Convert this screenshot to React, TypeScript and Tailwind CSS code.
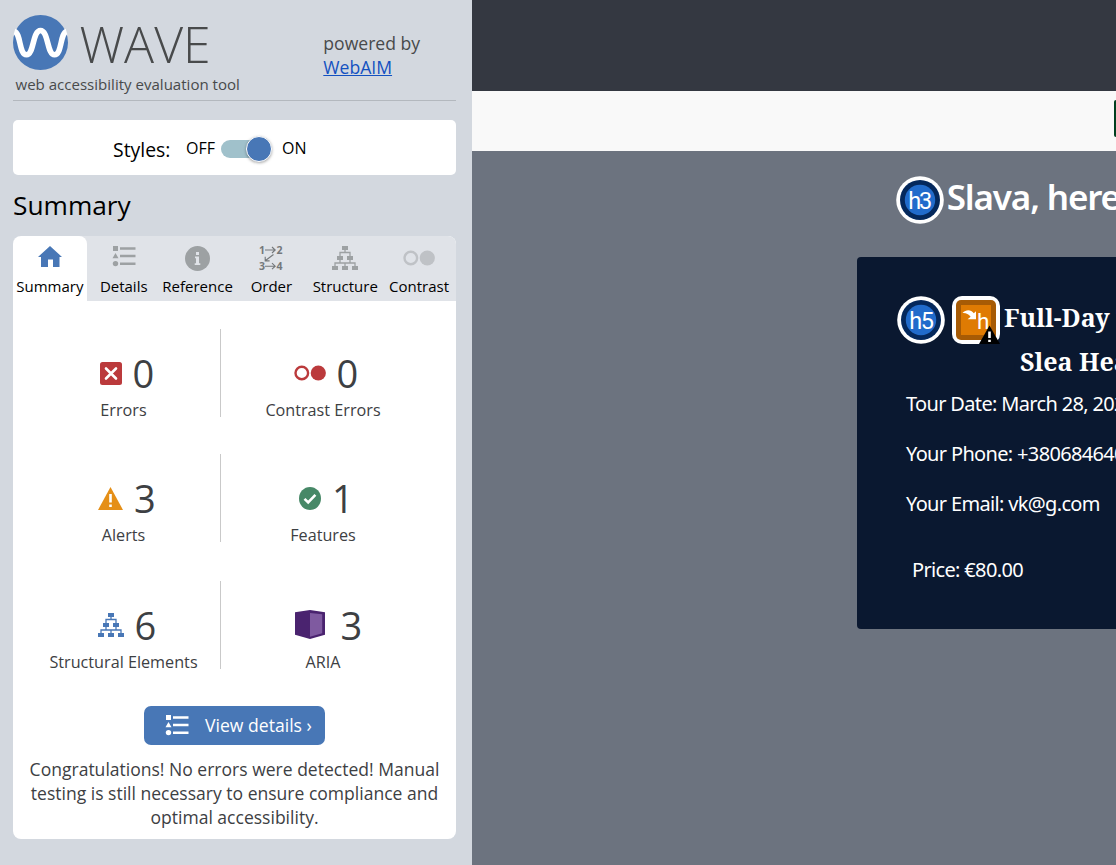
import type { ReactNode } from "react";

const TreeIcon = ({ className = "" }: { className?: string }) => (
  <svg viewBox="0 0 26 24" className={className} fill="currentColor">
    <path d="M10 0h6v4h-6zM5 10h6v4H5zM15 10h6v4h-6zM0 20h6v4H0zM10 20h6v4h-6zM20 20h6v4h-6z" />
    <path d="M13 4v3M8 10V6.500h10v3.500M8 14v3M18 14v3M3 20v-3h20v3M13 17v3" fill="none" stroke="currentColor" strokeWidth="1.300" />
  </svg>
);

const ListIcon = ({ className = "" }: { className?: string }) => (
  <svg viewBox="0 0 24 21" className={className} fill="currentColor">
    <path d="M1 0h5v5H1zM8 1.3h15.500v2.500H8zM8 8.800h15.500v2.500H8zM8 16.400h15.500v2.500H8zM3.500 7l3 5.300h-6z" />
    <circle cx="3.500" cy="17.600" r="2.700" />
  </svg>
);

const RingsIcon = ({ className = "" }: { className?: string }) => (
  <svg viewBox="0 0 32 16" className={className}>
    <circle cx="7.800" cy="8" r="6.300" fill="none" stroke="currentColor" strokeWidth="2.400" />
    <circle cx="24.300" cy="8" r="7.600" fill="currentColor" />
  </svg>
);

const HomeIcon = () => (
  <svg viewBox="0 0 24 21" className="-mt-[4px] ml-px h-[21px] w-6" fill="#4877b6">
    <path d="M12 0l12 11h-2.500v10h-6.500v-7.500h-5V21H3V11H0z" />
  </svg>
);

const InfoIcon = () => (
  <svg viewBox="0 0 25 25" className="size-[25px]">
    <circle cx="12.500" cy="12.500" r="12.500" fill="#9da1a3" />
    <path d="M11 6h3v3h-3zM10 10.500h4v6.700h1.300v1.700H9.700v-1.700H11v-5h-1z" fill="#e0e3e8" />
  </svg>
);

const OrderIcon = () => (
  <svg viewBox="0 0 24 26" className="h-[26px] w-6 overflow-visible" fill="#74787b">
    <g fontFamily="Open Sans, sans-serif" fontWeight="700" fontSize="10.500">
      <text x="0" y="8.800">1</text>
      <text x="17.400" y="8.800">2</text>
      <text x="0" y="25">3</text>
      <text x="17.400" y="25">4</text>
    </g>
    <path d="M6 5h10M13 2l3.200 3-3.200 3M6 21.200h10M13 18.200l3.200 3-3.200 3M14.500 9.500l-8.300 6.300M6.200 11.700v4.200h4.400" fill="none" stroke="#74787b" strokeWidth="1.100" />
  </svg>
);

const tabs: { name: string; icon: ReactNode }[] = [
  { name: "Summary", icon: <HomeIcon /> },
  { name: "Details", icon: <ListIcon className="-mt-[3px] h-[21px] w-6 text-[#9da1a3]" /> },
  { name: "Reference", icon: <InfoIcon /> },
  { name: "Order", icon: <OrderIcon /> },
  { name: "Structure", icon: <TreeIcon className="h-6 w-[26px] text-[#9da1a3]" /> },
  { name: "Contrast", icon: <RingsIcon className="h-4 w-8 text-[#bfc2c6]" /> },
];

const ErrorIcon = () => (
  <svg viewBox="0 0 22 23" className="h-[23px] w-[22px]">
    <rect width="22" height="23" rx="2.500" fill="#bb3a3c" />
    <path d="M6 6.500l10 10M16 6.500l-10 10" stroke="white" strokeWidth="2.600" strokeLinecap="round" />
  </svg>
);

const AlertIcon = () => (
  <svg viewBox="0 0 25 23" className="h-[23px] w-[25px]">
    <path d="M12.500 0L25 23H0z" fill="#e58f17" />
    <path d="M11.200 7h2.600v8.500h-2.600zM11.200 17.500h2.600V20h-2.600z" fill="white" />
  </svg>
);

const FeatureIcon = () => (
  <svg viewBox="0 0 22 23" className="h-[23px] w-[22px]">
    <ellipse cx="11" cy="11.500" rx="11" ry="11.500" fill="#478867" />
    <path d="M5.500 11.800l3.700 3.700 7.200-7.600" fill="none" stroke="white" strokeWidth="2.600" />
  </svg>
);

const AriaIcon = () => (
  <svg viewBox="0 0 30 29" className="-mt-[2px] h-[29px] w-[30px]">
    <path d="M0 2.200L15 0l15 2.200v22.600L15 29 0 24.800z" fill="#4a236f" />
    <path d="M15 3l12.200 1.300v19L15 26.800z" fill="#7f5aa0" />
  </svg>
);

type Stat = { label: string; value: number; icon: ReactNode; pad: string; gap: string };

const stats: { left: Stat; right: Stat }[] = [
  {
    left: { label: "Errors", value: 0, icon: <ErrorIcon />, pad: "pl-[73px]", gap: "ml-[10.500px]" },
    right: { label: "Contrast Errors", value: 0, icon: <RingsIcon className="h-4 w-8 text-[#bb3a3c]" />, pad: "pl-[73px]", gap: "ml-[10.500px]" },
  },
  {
    left: { label: "Alerts", value: 3, icon: <AlertIcon />, pad: "pl-[71px]", gap: "ml-[11px]" },
    right: { label: "Features", value: 1, icon: <FeatureIcon />, pad: "pl-[78px]", gap: "ml-[11px]" },
  },
  {
    left: { label: "Structural Elements", value: 6, icon: <TreeIcon className="h-6 w-[26px] text-[#4877b6]" />, pad: "pl-[71px]", gap: "ml-[10.500px]" },
    right: { label: "ARIA", value: 3, icon: <AriaIcon />, pad: "pl-[74px]", gap: "ml-[15.500px]" },
  },
];

const StatCell = ({ stat }: { stat: Stat }) => (
  <>
    <div className={`flex h-[46px] items-center text-[38px] leading-[46px] ${stat.pad}`}>
      <span className="shrink-0">{stat.icon}</span>
      <span className={`-mt-px ${stat.gap}`}>{stat.value}</span>
    </div>
    <div className="pt-[2px] text-center text-[16.200px] leading-6">{stat.label}</div>
  </>
);

const HeadingBadge = ({ level }: { level: string }) => (
  <svg viewBox="0 0 48 48" className="size-12 shrink-0">
    <circle cx="24" cy="24" r="23.800" fill="white" />
    <circle cx="24" cy="24" r="20" fill="#04285c" />
    <circle cx="24" cy="24" r="15.200" fill="#216bcb" />
    <text x="12.300" y="33" fill="white" fontFamily="Roboto, sans-serif" fontSize="23.500" textLength="24">
      {level}
    </text>
  </svg>
);

const SkippedBadge = () => (
  <svg viewBox="0 0 48 48" className="size-12 shrink-0">
    <rect width="48" height="48" rx="10" fill="white" />
    <rect x="4" y="4" width="40" height="40" rx="5" fill="#a75b05" />
    <rect x="9" y="9" width="30" height="30" fill="#df7b03" />
    <path d="M10.500 17c3.500-4 8.500-3.700 11.300.2l2.200-1.900v8h-8.400l3-2.600c-2.200-2.900-4.800-4-8.100-3.700z" fill="white" />
    <text x="25" y="33" fill="white" fontFamily="Roboto, sans-serif" fontSize="22.500">h</text>
    <path d="M37.500 29.500L48 48H27z" fill="black" />
    <path d="M36.200 35.500h2.600v6.500h-2.600zM36.200 43.700h2.600v2.300h-2.600z" fill="white" />
  </svg>
);

const Sidebar = () => (
  <aside className="h-full w-[472px] shrink-0 bg-[#d3d8df] pr-4 pl-[13px] font-['Open_Sans',sans-serif]">
    <header className="flex h-[101px] border-b border-[#b3b8be] text-[#484a4b]">
      <div className="w-[310.300px] pt-[15px]">
        <div className="flex h-[55px] items-center">
          <svg viewBox="0 0 55 55" className="size-[55px]">
            <circle cx="27.500" cy="27.500" r="27.500" fill="#4877b6" />
            <path d="M1.500 16.500C8 18.500 6 39.800 13.500 39.800S19.500 15.500 27.500 15.500 34 39.800 41.500 39.800 47 18.500 53.500 16.500" fill="none" stroke="white" strokeWidth="5.600" />
          </svg>
          <span className="mt-[3px] ml-[11.500px] text-[50px] leading-[55px] font-light">WAVE</span>
        </div>
        <div className="pl-[2.500px] text-[15.050px] leading-[28px]">web accessibility evaluation tool</div>
      </div>
      <div className="pt-[31px] text-[17.600px] leading-6">
        powered by
        <br />
        <a className="text-[#1351c1] underline">WebAIM</a>
      </div>
    </header>
    <div className="mt-[19px] flex h-[55px] items-center rounded-[5px] bg-white pl-[100px] text-black">
      <span className="mt-[4px] w-[73px] text-[19.400px]">Styles:</span>
      <span className="w-[35px] text-[16px]">OFF</span>
      <span className="mt-[3px] flex h-[18px] w-[50px] items-center justify-end rounded-full bg-[#a0c1cb]">
        <span className="-mr-[0.500px] size-[26px] shrink-0 rounded-full border border-white bg-[#4877b6] shadow-[0_1px_3px_rgba(0,0,0,0.35)]" />
      </span>
      <span className="ml-[11px] text-[16px]">ON</span>
    </div>
    <h1 className="mt-[10px] h-[51px] text-[26.300px] leading-[40px] text-black">Summary</h1>
    <section className="h-[603px] overflow-hidden rounded-[8px] bg-white text-[#3d4043]">
      <nav className="grid h-[65px] grid-cols-6 bg-[#e0e3e8]">
        {tabs.map((tab, i) => (
          <div key={tab.name} className={i === 0 ? "flex flex-col items-center rounded-t-[8px] bg-white text-black" : "flex flex-col items-center text-black"}>
            <div className="mt-2 flex h-7 items-center">{tab.icon}</div>
            <div className="mt-[3px] text-[15px] leading-[22px] whitespace-nowrap">{tab.name}</div>
          </div>
        ))}
      </nav>
      <div className="flex flex-col pt-7 pl-[14px]">
        {stats.map((row, i) => (
          <div key={row.left.label} className={i === 0 ? "flex h-[88px]" : i === 1 ? "mt-[37px] flex h-[88px]" : "mt-[39px] flex h-[88px]"}>
            <div className="w-[194px] border-r border-[#c9c9c9] pt-[21px]">
              <StatCell stat={row.left} />
            </div>
            <div className="w-[204px] pt-[21px]">
              <StatCell stat={row.right} />
            </div>
          </div>
        ))}
      </div>
      <button className="mt-[37px] ml-[131px] flex h-[39px] w-[181px] items-center rounded-[7px] bg-[#4877b6] pl-[21px] text-[17.600px] text-white">
        <ListIcon className="-mt-px h-[21px] w-6" />
        <span className="-mt-px ml-4">View details ›</span>
      </button>
      <p className="mt-3 text-center text-[17.550px] leading-6 whitespace-nowrap">
        Congratulations! No errors were detected! Manual
        <br />
        testing is still necessary to ensure compliance and
        <br />
        optimal accessibility.
      </p>
    </section>
  </aside>
);

const BookingPage = () => (
  <main className="flex h-full min-w-0 flex-1 flex-col overflow-hidden bg-[#6c737f] text-white">
    <div className="h-[91px] shrink-0 bg-[#343841]" />
    <div className="flex h-[60px] shrink-0 justify-end bg-[#f9f9f9] pt-[9px]">
      <div className="h-[37px] w-[2px] rounded-l-sm bg-[#00401f]" />
    </div>
    <div className="flex h-[106px] shrink-0 items-start pt-[24.600px] pl-[423.700px]">
      <HeadingBadge level="h3" />
      <h3 className="-mt-[3px] ml-[3px] font-['Noto_Sans',sans-serif] text-[35px] leading-[48px] font-semibold tracking-[-1.150px] whitespace-nowrap">Slava, here</h3>
    </div>
    <article className="ml-[385px] h-[372px] w-[500px] shrink-0 rounded-[4px] bg-[#0a1830] font-['Noto_Sans',sans-serif] text-[20px] leading-[30px] tracking-[-0.660px] whitespace-nowrap">
      <div className="flex items-start pt-[39.400px] pl-[40.400px]">
        <HeadingBadge level="h5" />
        <div className="ml-[7px]">
          <SkippedBadge />
        </div>
        <h5 className="-mt-[1.400px] ml-[3.600px] font-['Noto_Serif','DejaVu_Serif_Condensed','DejaVu_Serif',serif] text-[25px] leading-[44px] font-bold tracking-normal">
          Full-Day Tour
          <br />
          <span className="pl-4">Slea Head</span>
        </h5>
      </div>
      <div className="flex flex-col gap-5 pt-[6px] pl-[49px]">
        <p>Tour Date: March 28, 2025</p>
        <p>Your Phone: +380684640</p>
        <p>Your Email: vk@g.com</p>
      </div>
      <p className="pt-9 pl-[55px]">Price: €80.00</p>
    </article>
  </main>
);

export default function App() {
  return (
    <div className="flex h-[865px] w-[1116px] overflow-hidden">
      <Sidebar />
      <BookingPage />
    </div>
  );
}
